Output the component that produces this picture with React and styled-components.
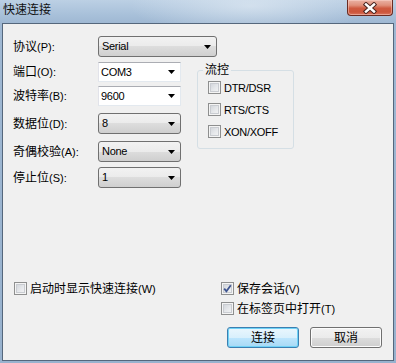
import React from 'react';
import styled, { createGlobalStyle } from 'styled-components';

const Global = createGlobalStyle`
  html, body { margin: 0; padding: 0; background: #fff; }
  body { font-family: "Liberation Sans", "Noto Sans CJK SC", sans-serif; }
  * { box-sizing: border-box; }
`;

const Window = styled.div`
  width: 396px;
  height: 363px;
  display: flex;
  flex-direction: column;
  padding: 0 2px 2px 2px;
  background:
    radial-gradient(ellipse 120px 30px at 250px 6px, rgba(235,242,248,0.55), rgba(235,242,248,0) 100%),
    linear-gradient(180deg, #bcd0e4 0%, #a9c1da 14px, #9fb8d3 23px, #98b2ce 100%);
  font-size: 12px;
  color: #000;
`;

const TitleBar = styled.div`
  height: 23px;
  display: flex;
  align-items: flex-start;
  flex-shrink: 0;
`;

const Title = styled.div`
  padding: 3px 0 0 1px;
  line-height: 14px;
  font-size: 12px;
  color: #111;
`;

const CloseButton = styled.div`
  margin-left: auto;
  margin-right: 1px;
  width: 46px;
  height: 16px;
  border: 1px solid #6a2b22;
  border-top: none;
  border-radius: 0 0 4px 4px;
  background: linear-gradient(180deg, #eab2a4 0%, #e0907b 35%, #cf5a40 55%, #cc553b 80%, #da7660 100%);
  box-shadow: inset 0 0 0 1px rgba(255, 220, 210, 0.45);
  display: flex;
  align-items: center;
  justify-content: center;
`;

const Panel = styled.div`
  flex: 1;
  display: flex;
  flex-direction: column;
  border: 1px solid #55677c;
  background: #f0f0f0;
  padding: 12px 11px 12px 10px;
`;

const Form = styled.div`
  display: flex;
  align-items: flex-start;
`;

const Fields = styled.div`
  width: 168px;
  flex-shrink: 0;
  display: flex;
  flex-direction: column;
`;

const FieldRow = styled.div`
  display: flex;
  align-items: center;
  margin-top: ${(p) => p.$mt || 0}px;
`;

const Label = styled.div`
  width: 85px;
  flex-shrink: 0;
  line-height: 14px;
  white-space: nowrap;
  font-size: 12px;
`;

const Key = styled.span`
  font-size: 11px;
`;

const ComboList = styled.div`
  width: ${(p) => p.$w}px;
  height: 21px;
  flex-shrink: 0;
  display: flex;
  align-items: center;
  padding: 0 5px 0 3px;
  border: 1px solid #707070;
  border-radius: 3px;
  background: linear-gradient(180deg, #f2f2f2 0%, #ebebeb 50%, #dddddd 50%, #cfcfcf 100%);
  font-size: 11px;
  letter-spacing: -0.3px;
  line-height: 13px;
`;

const ComboEdit = styled.div`
  width: ${(p) => p.$w}px;
  height: 20px;
  flex-shrink: 0;
  display: flex;
  align-items: center;
  padding: 0 5px 0 2px;
  border: 1px solid;
  border-color: #abadb3 #e3e9ef #e3e9ef #e2e3ea;
  background: #fff;
  font-size: 11px;
  letter-spacing: -0.3px;
  line-height: 13px;
`;

const ArrowBox = styled.svg`
  margin-left: auto;
  flex-shrink: 0;
`;

const Arrow = () => (
  <ArrowBox width="7" height="4" viewBox="0 0 7 4">
    <polygon points="0,0 7,0 3.5,4" fill="#000" />
  </ArrowBox>
);

const Group = styled.fieldset`
  margin: 27px 0 0 16px;
  padding: 0;
  width: 97px;
  height: 86px;
  border: 1px solid #d5dfe5;
  border-radius: 3px;
`;

const Legend = styled.legend`
  margin-left: 5px;
  padding: 0 2px;
  line-height: 14px;
  font-size: 12px;
`;

const GroupBody = styled.div`
  display: flex;
  flex-direction: column;
  gap: 9px;
  padding: 4px 0 0 10px;
`;

const CheckRow = styled.label`
  display: flex;
  align-items: center;
  gap: 3px;
  height: 13px;
  margin-top: ${(p) => p.$mt || 0}px;
  margin-left: ${(p) => p.$ml || 0}px;
  white-space: nowrap;
  line-height: 14px;
  font-size: 12px;
`;

const Text = styled.span`
  white-space: nowrap;
`;

const Latin = styled.span`
  font-size: 11px;
  letter-spacing: -0.3px;
`;

const Box = styled.span`
  width: 13px;
  height: 13px;
  flex-shrink: 0;
  border: 1px solid #8e8f8f;
  background: linear-gradient(135deg, #cbcfd5 0%, #e6e8eb 55%, #f7f7f7 100%);
  box-shadow: inset 0 0 0 1px #f4f4f4, inset 0 0 0 2px #c9ccd1;
  display: flex;
  align-items: center;
  justify-content: center;
`;

const Check = ({ checked }) => (
  <Box>
    {checked && (
      <svg width="9" height="9" viewBox="0 0 9 9">
        <path d="M1.2 4.6 L3.4 7.2 L7.8 1.2" fill="none" stroke="#3f5590" strokeWidth="1.8" />
      </svg>
    )}
  </Box>
);

const Spacer = styled.div`
  flex: 1;
`;

const Bottom = styled.div`
  display: flex;
  align-items: flex-start;
`;

const RightCol = styled.div`
  margin-left: auto;
  width: 161px;
  display: flex;
  flex-direction: column;
`;

const Buttons = styled.div`
  margin-top: 12px;
  display: flex;
  justify-content: flex-end;
  gap: 11px;
`;

const Button = styled.button`
  width: 72px;
  height: 21px;
  padding: 0;
  font-family: inherit;
  font-size: 12px;
  color: #000;
  border-radius: 3px;
  border: 1px solid ${(p) => (p.$default ? '#3c7fb1' : '#707070')};
  background: ${(p) =>
    p.$default
      ? 'linear-gradient(180deg, #eaf6fd 0%, #d9f0fc 50%, #bee6fd 50%, #a7d9f5 100%)'
      : 'linear-gradient(180deg, #f2f2f2 0%, #ebebeb 50%, #dddddd 50%, #cfcfcf 100%)'};
  box-shadow: ${(p) => (p.$default ? 'inset 0 0 0 1px #6fd2f6' : 'inset 0 0 0 1px #fcfcfc')};
  line-height: 14px;
`;

export default function App() {
  return (
    <>
      <Global />
      <Window>
        <TitleBar>
          <Title>快速连接</Title>
          <CloseButton>
            <svg width="16" height="12" viewBox="0 0 16 12">
              <path d="M4 2.5 L12 9.5 M12 2.5 L4 9.5" stroke="#4a2520" strokeWidth="4.4" strokeLinecap="square" />
              <path d="M4 2.5 L12 9.5 M12 2.5 L4 9.5" stroke="#ffffff" strokeWidth="2.4" strokeLinecap="square" />
            </svg>
          </CloseButton>
        </TitleBar>
        <Panel>
          <Form>
            <Fields>
              <FieldRow>
                <Label>协议<Key>(P):</Key></Label>
                <ComboList $w={119}>Serial<Arrow /></ComboList>
              </FieldRow>
              <FieldRow $mt={5}>
                <Label>端口<Key>(O):</Key></Label>
                <ComboEdit $w={83}>COM3<Arrow /></ComboEdit>
              </FieldRow>
              <FieldRow $mt={4}>
                <Label>波特率<Key>(B):</Key></Label>
                <ComboEdit $w={83}>9600<Arrow /></ComboEdit>
              </FieldRow>
              <FieldRow $mt={7}>
                <Label>数据位<Key>(D):</Key></Label>
                <ComboList $w={83}>8<Arrow /></ComboList>
              </FieldRow>
              <FieldRow $mt={7}>
                <Label>奇偶校验<Key>(A):</Key></Label>
                <ComboList $w={83}>None<Arrow /></ComboList>
              </FieldRow>
              <FieldRow $mt={5}>
                <Label>停止位<Key>(S):</Key></Label>
                <ComboList $w={83}>1<Arrow /></ComboList>
              </FieldRow>
            </Fields>
            <Group>
              <Legend>流控</Legend>
              <GroupBody>
                <CheckRow><Check /><Latin>DTR/DSR</Latin></CheckRow>
                <CheckRow><Check /><Latin>RTS/CTS</Latin></CheckRow>
                <CheckRow><Check /><Latin>XON/XOFF</Latin></CheckRow>
              </GroupBody>
            </Group>
          </Form>
          <Spacer />
          <Bottom>
            <CheckRow $ml={1}><Check /><Text>启动时显示快速连接<Key>(W)</Key></Text></CheckRow>
            <RightCol>
              <CheckRow><Check checked /><Text>保存会话<Key>(V)</Key></Text></CheckRow>
              <CheckRow $mt={7}><Check /><Text>在标签页中打开<Key>(T)</Key></Text></CheckRow>
              <Buttons>
                <Button $default>连接</Button>
                <Button>取消</Button>
              </Buttons>
            </RightCol>
          </Bottom>
        </Panel>
      </Window>
    </>
  );
}
